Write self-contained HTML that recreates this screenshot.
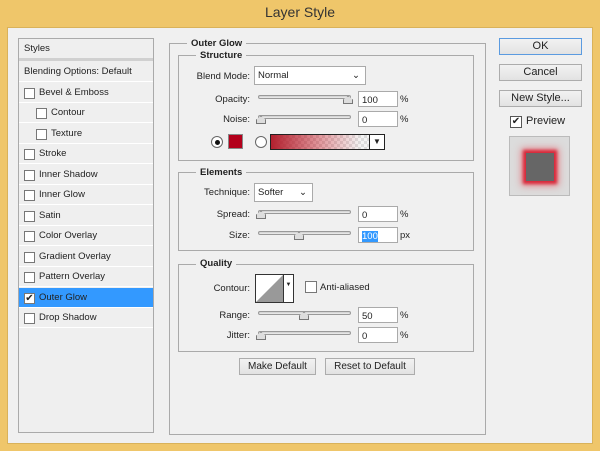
<!DOCTYPE html>
<html><head><meta charset="utf-8"><style>
*{box-sizing:border-box;margin:0;padding:0}
body{width:600px;height:451px;background:#efc66a;font-family:"Liberation Sans",sans-serif;font-size:9.5px;color:#222;position:relative;overflow:hidden}
.a{position:absolute}
.win{left:7px;top:27px;width:586px;height:417px;background:#f0f0f0;border:1px solid #d9b25a}
.title{left:0;top:4px;width:600px;text-align:center;font-size:14px;color:#333}
.list{left:18px;top:38px;width:136px;height:395px;border:1px solid #aaa;background:#efefef}
.row{position:absolute;left:0;width:134px;height:20px;border-bottom:1px solid #fff;line-height:20px}
.cb{position:absolute;width:11px;height:11px;border:1px solid #777;background:#fff;top:5px}
.grp{border:1px solid #aaa}
.lg{position:absolute;background:#f0f0f0;font-weight:bold;padding:0 4px;font-size:9.5px;line-height:11px}
.lbl{position:absolute;text-align:right;width:80px}
.sl{position:absolute;height:4px;border:1px solid #999;border-radius:2px;background:linear-gradient(#ccc,#eee)}
.th{position:absolute;width:10px;height:8px;background:#ddd;border:1px solid #777;clip-path:polygon(50% 0,100% 45%,100% 100%,0 100%,0 45%)}
.inp{position:absolute;height:16px;border:1px solid #aaa;background:#fff;padding-left:3px;line-height:15px;padding-top:1px}
.btn{position:absolute;height:17px;border:1px solid #acacac;background:linear-gradient(#f2f2f2,#e2e2e2);text-align:center;line-height:15px;font-size:10px}
.dd{position:absolute;height:19px;border:1px solid #aaa;background:#fff;padding-left:3px;line-height:17px}
</style></head><body>
<div class="a title">Layer Style</div>
<div class="a win"></div>
<div class="a list">
<div class="row" style="top:0;height:22px;border-bottom:3px solid #d0d0d0;padding-left:5px">Styles</div>
<div class="row" style="top:23px;padding-left:5px">Blending Options: Default</div>
<div class="row" style="top:44px;padding-left:20px"><span class="cb" style="left:5px"></span>Bevel &amp; Emboss</div>
<div class="row" style="top:64px;padding-left:32px"><span class="cb" style="left:17px"></span>Contour</div>
<div class="row" style="top:85px;padding-left:32px"><span class="cb" style="left:17px"></span>Texture</div>
<div class="row" style="top:105px;padding-left:20px"><span class="cb" style="left:5px"></span>Stroke</div>
<div class="row" style="top:126px;padding-left:20px"><span class="cb" style="left:5px"></span>Inner Shadow</div>
<div class="row" style="top:146px;padding-left:20px"><span class="cb" style="left:5px"></span>Inner Glow</div>
<div class="row" style="top:167px;padding-left:20px"><span class="cb" style="left:5px"></span>Satin</div>
<div class="row" style="top:187px;padding-left:20px"><span class="cb" style="left:5px"></span>Color Overlay</div>
<div class="row" style="top:208px;padding-left:20px"><span class="cb" style="left:5px"></span>Gradient Overlay</div>
<div class="row" style="top:228px;padding-left:20px"><span class="cb" style="left:5px"></span>Pattern Overlay</div>
<div class="row" style="top:249px;padding-left:20px;background:#3399ff"><span class="cb" style="left:5px;font-size:10px;line-height:9px;text-align:center">✔</span>Outer Glow</div>
<div class="row" style="top:269px;padding-left:20px"><span class="cb" style="left:5px"></span>Drop Shadow</div>
</div>

<div class="a grp" style="left:169px;top:43px;width:317px;height:392px"></div>
<div class="lg" style="left:187px;top:38px">Outer Glow</div>
<div class="a grp" style="left:178px;top:55px;width:296px;height:106px"></div>
<div class="lg" style="left:196px;top:50px">Structure</div>
<div class="lbl" style="left:170px;top:71px">Blend Mode:</div>
<div class="dd" style="left:254px;top:66px;width:112px">Normal<span style="position:absolute;right:5px;top:0">⌄</span></div>
<div class="lbl" style="left:170px;top:94px">Opacity:</div>
<div class="sl" style="left:258px;top:95px;width:93px"></div><div class="th" style="left:343px;top:96px"></div>
<div class="inp" style="left:358px;top:91px;width:40px">100</div><div class="a" style="left:400px;top:94px">%</div>
<div class="lbl" style="left:170px;top:114px">Noise:</div>
<div class="sl" style="left:258px;top:115px;width:93px"></div><div class="th" style="left:256px;top:116px"></div>
<div class="inp" style="left:358px;top:111px;width:40px">0</div><div class="a" style="left:400px;top:114px">%</div>
<div class="a" style="left:211px;top:136px;width:12px;height:12px;border-radius:50%;border:1px solid #666;background:#fff"><div style="margin:2.5px;width:5px;height:5px;border-radius:50%;background:#111"></div></div>
<div class="a" style="left:228px;top:134px;width:15px;height:15px;background:#b3001b;border:1px solid #888"></div>
<div class="a" style="left:255px;top:136px;width:12px;height:12px;border-radius:50%;border:1px solid #666;background:#fff"></div>
<div class="a" style="left:270px;top:134px;width:115px;height:16px;border:1px solid #222;background:linear-gradient(90deg,#b3202e,rgba(200,60,70,.5) 45%,rgba(220,220,220,.3) 80%),repeating-conic-gradient(#ddd 0 25%,#fff 0 50%) 0 0/6px 6px"><div style="position:absolute;right:0;top:0;width:15px;height:14px;background:#fff;border-left:1px solid #222;text-align:center;font-size:8px;line-height:14px">▼</div></div>

<div class="a grp" style="left:178px;top:172px;width:296px;height:79px"></div>
<div class="lg" style="left:196px;top:167px">Elements</div>
<div class="lbl" style="left:170px;top:187px">Technique:</div>
<div class="dd" style="left:254px;top:183px;width:59px">Softer<span style="position:absolute;right:5px;top:0">⌄</span></div>
<div class="lbl" style="left:170px;top:209px">Spread:</div>
<div class="sl" style="left:258px;top:210px;width:93px"></div><div class="th" style="left:256px;top:211px"></div>
<div class="inp" style="left:358px;top:206px;width:40px">0</div><div class="a" style="left:400px;top:209px">%</div>
<div class="lbl" style="left:170px;top:230px">Size:</div>
<div class="sl" style="left:258px;top:231px;width:93px"></div><div class="th" style="left:294px;top:232px"></div>
<div class="inp" style="left:358px;top:227px;width:40px"><span style="background:#3399ff;color:#fff">100</span></div><div class="a" style="left:400px;top:230px">px</div>

<div class="a grp" style="left:178px;top:264px;width:296px;height:88px"></div>
<div class="lg" style="left:196px;top:258px">Quality</div>
<div class="lbl" style="left:170px;top:283px">Contour:</div>
<div class="a" style="left:255px;top:274px;width:39px;height:29px;border:1px solid #333;background:#fff"><svg width="27" height="27" style="position:absolute;left:0;top:0"><polygon points="0,27 27,0 27,27" fill="#999"/></svg><div style="position:absolute;right:0;top:0;width:10px;height:27px;border-left:1px solid #333;font-size:6px;text-align:center;line-height:20px">▼</div></div>
<div class="a" style="left:305px;top:281px;width:12px;height:12px;border:1px solid #777;background:#fff"></div>
<div class="a" style="left:320px;top:282px">Anti-aliased</div>
<div class="lbl" style="left:170px;top:310px">Range:</div>
<div class="sl" style="left:258px;top:311px;width:93px"></div><div class="th" style="left:299px;top:312px"></div>
<div class="inp" style="left:358px;top:307px;width:40px">50</div><div class="a" style="left:400px;top:310px">%</div>
<div class="lbl" style="left:170px;top:330px">Jitter:</div>
<div class="sl" style="left:258px;top:331px;width:93px"></div><div class="th" style="left:256px;top:332px"></div>
<div class="inp" style="left:358px;top:327px;width:40px">0</div><div class="a" style="left:400px;top:330px">%</div>
<div class="btn" style="left:239px;top:358px;width:77px">Make Default</div>
<div class="btn" style="left:325px;top:358px;width:90px">Reset to Default</div>

<div class="btn" style="left:499px;top:38px;width:83px;border-color:#5b9be0;font-size:11px">OK</div>
<div class="btn" style="left:499px;top:64px;width:83px;font-size:11px">Cancel</div>
<div class="btn" style="left:499px;top:90px;width:83px;font-size:11px">New Style...</div>
<div class="a" style="left:510px;top:116px;width:12px;height:12px;border:1px solid #555;background:#fff;font-size:10px;line-height:10px;text-align:center">✔</div>
<div class="a" style="left:526px;top:115px;font-size:11px">Preview</div>
<div class="a" style="left:509px;top:136px;width:61px;height:60px;background:#dcdcdc;border:1px solid #bbb"><div style="position:absolute;left:16px;top:16px;width:28px;height:28px;background:#666;box-shadow:0 0 3px 3px #d8283a,0 0 7px 5px rgba(230,90,100,.6)"></div></div>
</body></html>
